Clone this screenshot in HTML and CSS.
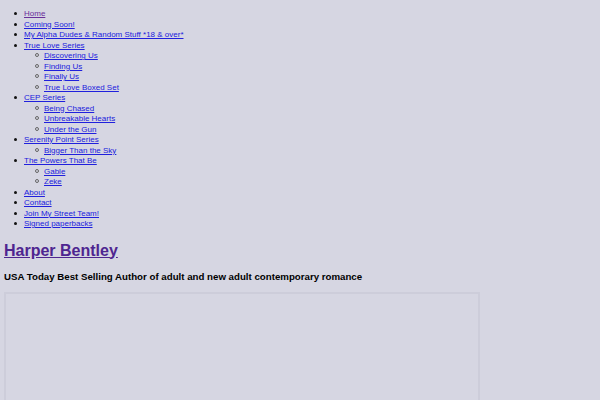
FILE: index.html
```html
<!DOCTYPE html>
<html>
<head>
<meta charset="utf-8">
<link rel="stylesheet" href="styles.css">
</head>
<body>
<nav class="menu">
<ul class="menu-list">
<li><a class="visited" href="#">Home</a></li>
<li><a href="#">Coming Soon!</a></li>
<li><a href="#">My Alpha Dudes &amp; Random Stuff *18 &amp; over*</a></li>
<li><a href="#">True Love Series</a>
<ul class="sub">
<li><a href="#">Discovering Us</a></li>
<li><a href="#">Finding Us</a></li>
<li><a href="#">Finally Us</a></li>
<li><a href="#">True Love Boxed Set</a></li>
</ul></li>
<li><a href="#">CEP Series</a>
<ul class="sub">
<li><a href="#">Being Chased</a></li>
<li><a href="#">Unbreakable Hearts</a></li>
<li><a href="#">Under the Gun</a></li>
</ul></li>
<li><a href="#">Serenity Point Series</a>
<ul class="sub">
<li><a href="#">Bigger Than the Sky</a></li>
</ul></li>
<li><a href="#">The Powers That Be</a>
<ul class="sub">
<li><a href="#">Gable</a></li>
<li><a href="#">Zeke</a></li>
</ul></li>
<li><a href="#">About</a></li>
<li><a href="#">Contact</a></li>
<li><a href="#">Join My Street Team!</a></li>
<li><a href="#">Signed paperbacks</a></li>
</ul>
</nav>
<header class="site-header">
<h1 class="site-title"><a href="#">Harper Bentley</a></h1>
<h2 class="site-desc">USA Today Best Selling Author of adult and new adult contemporary romance</h2>
</header>
<div class="content-box"></div>
</body>
</html>
```
FILE: styles.css
```css
html, body {
  background: #d6d6e2;
}
body {
  margin: 9px 4px 0 4px;
  font-family: "Liberation Sans", Arial, sans-serif;
  color: #000;
  overflow: hidden;
}
.menu-list {
  margin: 0;
  padding-left: 20px;
  font-size: 8px;
  line-height: 10.5px;
  list-style: none;
}
.menu-list > li::before {
  content: "";
  display: inline-block;
  width: 3px;
  height: 3px;
  border-radius: 50%;
  background: #111;
  margin-left: -10px;
  margin-right: 7px;
  vertical-align: 1px;
}
.menu-list .sub {
  margin: 0;
  padding-left: 20px;
  list-style: none;
}
.menu-list .sub > li::before {
  content: "";
  display: inline-block;
  box-sizing: border-box;
  width: 4px;
  height: 4px;
  border-radius: 50%;
  border: 1px solid #666;
  background: transparent;
  margin-left: -9px;
  margin-right: 5px;
  vertical-align: 1px;
}
.menu a {
  color: #2020dd;
}
.menu a.visited {
  color: #6a2f9a;
}
.site-header {
  padding: 0;
}
.site-title {
  margin: 11px 0 0 0;
  font-size: 16px;
  line-height: 19px;
  font-weight: bold;
}
.site-title a {
  color: #4e2590;
}
.site-desc {
  margin: 10px 0 0 0;
  font-size: 9.7px;
  line-height: 13px;
  font-weight: bold;
}
.content-box {
  margin-top: 9px;
  width: 472px;
  height: 120px;
  border: 2px solid #cdcdda;
  border-bottom: none;
}
```
